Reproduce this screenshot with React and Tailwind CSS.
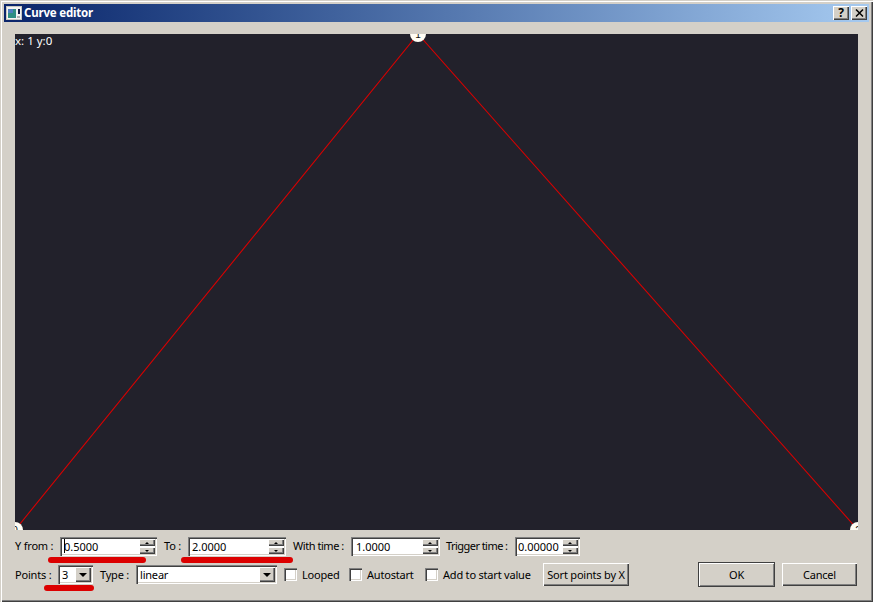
import React from "react";

const sunken =
  "shadow-[inset_1px_1px_0_#808080,inset_2px_2px_0_#404040,inset_-1px_-1px_0_#ffffff,inset_-2px_-2px_0_#d4d0c8]";
const raised =
  "shadow-[inset_1px_1px_0_#ffffff,inset_-1px_-1px_0_#404040,inset_-2px_-2px_0_#808080]";

function Arrow({ dir = "down", big = false }) {
  const cls = big
    ? "border-x-[4px] border-t-[4px] border-x-transparent border-t-black"
    : dir === "up"
      ? "border-x-[2px] border-b-[2px] border-x-transparent border-b-black"
      : "border-x-[2px] border-t-[2px] border-x-transparent border-t-black";
  return <span className={`w-0 h-0 ${cls}`} />;
}

function SpinBox({ value, width, caret, pad = "pl-[5px]" }) {
  return (
    <div className={`h-[19px] shrink-0 flex items-center bg-white ${sunken} ${width}`}>
      <div className={`relative flex-1 min-w-0 text-[11px] tracking-normal leading-none ${pad}`}>
        {caret && <span className="absolute left-[4px] top-[-2px] w-px h-[14px] bg-black" />}
        {value}
      </div>
      <div className="w-[16px] h-[15px] mr-[2px] flex flex-col gap-px shrink-0">
        <button className={`flex-1 flex items-center justify-center bg-[#d4d0c8] ${raised}`}>
          <Arrow dir="up" />
        </button>
        <button className={`flex-1 flex items-center justify-center bg-[#d4d0c8] ${raised}`}>
          <Arrow />
        </button>
      </div>
    </div>
  );
}

function Combo({ value, width }) {
  return (
    <div className={`h-[19px] shrink-0 flex items-center bg-white ${sunken} ${width}`}>
      <div className="flex-1 min-w-0 pl-[4px] text-[11px] leading-none">{value}</div>
      <button className={`w-[16px] h-[15px] mr-[2px] flex items-center justify-center bg-[#d4d0c8] ${raised}`}>
        <Arrow big />
      </button>
    </div>
  );
}

function Check({ label, width }) {
  return (
    <label className={`flex items-center gap-[5px] shrink-0 whitespace-nowrap ${width}`}>
      <span className={`w-[13px] h-[13px] bg-white ${sunken}`} />
      <span>{label}</span>
    </label>
  );
}

function Curve() {
  return (
    <svg width="843" height="496" viewBox="15 34 843 496" className="block">
      <rect x="15" y="34" width="843" height="496" fill="#22212b" />
      <polyline points="15,530 418,34 858,530" fill="none" stroke="#d80000" strokeWidth="1.1" />
      {[
        [15, 530, "0"],
        [418, 34, "1"],
        [858, 530, "2"],
      ].map(([x, y, n]) => (
        <g key={n}>
          <circle cx={x} cy={y} r="8" fill="#fffdf4" />
          <text x={x} y={y + 4} textAnchor="middle" fontSize="10" fill="#111" fontFamily="Liberation Sans, sans-serif">
            {n}
          </text>
        </g>
      ))}
    </svg>
  );
}

export default function App() {
  return (
    <div className="relative w-[873px] h-[602px] flex flex-col bg-[#d4d0c8] p-[4px] text-black font-['Noto_Sans',sans-serif] text-[11px] tracking-[-0.2px] leading-none shadow-[inset_1px_1px_0_#d4d0c8,inset_2px_2px_0_#ffffff,inset_-1px_-1px_0_#404040,inset_-2px_-2px_0_#808080]">
      {/* title bar */}
      <div className="h-[18px] shrink-0 flex items-center bg-gradient-to-r from-[#0a246a] to-[#a6caf0] pl-[2px] pr-[2px]">
        <svg width="16" height="14" viewBox="0 0 16 14" className="shrink-0">
          <rect width="16" height="14" fill="#c8c8c0" />
          <rect x="1" y="1" width="14" height="12" fill="#f4f4f4" />
          <rect x="2" y="3" width="8" height="9" fill="#2f8f83" />
          <rect x="2" y="3" width="5" height="4" fill="#4f7fc0" />
          <rect x="12" y="3" width="2" height="5" fill="#101840" />
          <rect x="11" y="10" width="3" height="2" fill="#b0b0b0" />
        </svg>
        <span className="ml-[2px] flex-1 text-white font-bold text-[11.5px] tracking-[-0.2px] leading-none pb-[1px]">Curve editor</span>
        <button className={`w-[16px] h-[14px] flex items-center justify-center bg-[#d4d0c8] font-bold text-[12px] leading-none ${raised}`}>
          ?
        </button>
        <button className={`w-[16px] h-[14px] ml-[2px] flex items-center justify-center bg-[#d4d0c8] ${raised}`}>
          <svg width="9" height="8" viewBox="0 0 9 8">
            <path d="M1 0.5 L8 7.5 M8 0.5 L1 7.5" stroke="#000" strokeWidth="1.5" />
          </svg>
        </button>
      </div>

      {/* canvas */}
      <div className="relative mt-[12px] ml-[11px] w-[843px] h-[496px] shrink-0 overflow-hidden">
        <Curve />
        <span className="absolute left-0 top-px text-[11.5px] tracking-normal leading-none text-white">x: 1 y:0</span>
      </div>

      {/* first row */}
      <div className="flex items-center mt-[7px] ml-[11px] h-[19px] whitespace-nowrap">
        <span className="w-[45px] shrink-0 pb-[2px]">Y from :</span>
        <SpinBox value="0.5000" width="w-[97px]" caret pad="pl-[4px]" />
        <span className="ml-[7px] w-[24px] shrink-0 pb-[2px]">To :</span>
        <SpinBox value="2.0000" width="w-[98px]" pad="pl-[4px]" />
        <span className="ml-[7px] w-[58px] shrink-0 pb-[2px] tracking-[-0.45px]">With time :</span>
        <SpinBox value="1.0000" width="w-[89px]" />
        <span className="ml-[6px] w-[69px] shrink-0 pb-[2px] tracking-[-0.55px]">Trigger time :</span>
        <SpinBox value="0.00000" width="w-[65px]" pad="pl-[3px]" />
      </div>

      {/* second row */}
      <div className="flex items-center mt-[6px] ml-[11px] h-[25px] whitespace-nowrap">
        <span className="w-[43px] shrink-0">Points :</span>
        <Combo value="3" width="w-[35px]" />
        <span className="ml-[7px] w-[36px] shrink-0">Type :</span>
        <Combo value="linear" width="w-[141px]" />
        <Check label="Looped" width="ml-[7px] w-[65px]" />
        <Check label="Autostart" width="ml-0 w-[76px]" />
        <Check label="Add to start value" width="w-[118px]" />
        <button className={`w-[86px] h-[23px] shrink-0 bg-[#d4d0c8] whitespace-nowrap ${raised}`}>
          Sort points by X
        </button>
        <button className="ml-[69px] w-[77px] h-[25px] shrink-0 bg-[#d4d0c8] outline outline-1 -outline-offset-1 outline-[#404040] shadow-[inset_2px_2px_0_#ffffff,inset_-2px_-2px_0_#808080]">
          OK
        </button>
        <button className={`ml-[7px] w-[75px] h-[23px] shrink-0 bg-[#d4d0c8] ${raised}`}>Cancel</button>
      </div>

      {/* red marker strokes drawn over the screenshot */}
      <span className="absolute left-[48px] top-[557px] w-[98px] h-[6px] rounded-full bg-[#dc0000]" />
      <span className="absolute left-[181px] top-[557px] w-[112px] h-[6px] rounded-full bg-[#dc0000]" />
      <span className="absolute left-[44px] top-[585px] w-[50px] h-[6px] rounded-full bg-[#dc0000]" />
    </div>
  );
}
